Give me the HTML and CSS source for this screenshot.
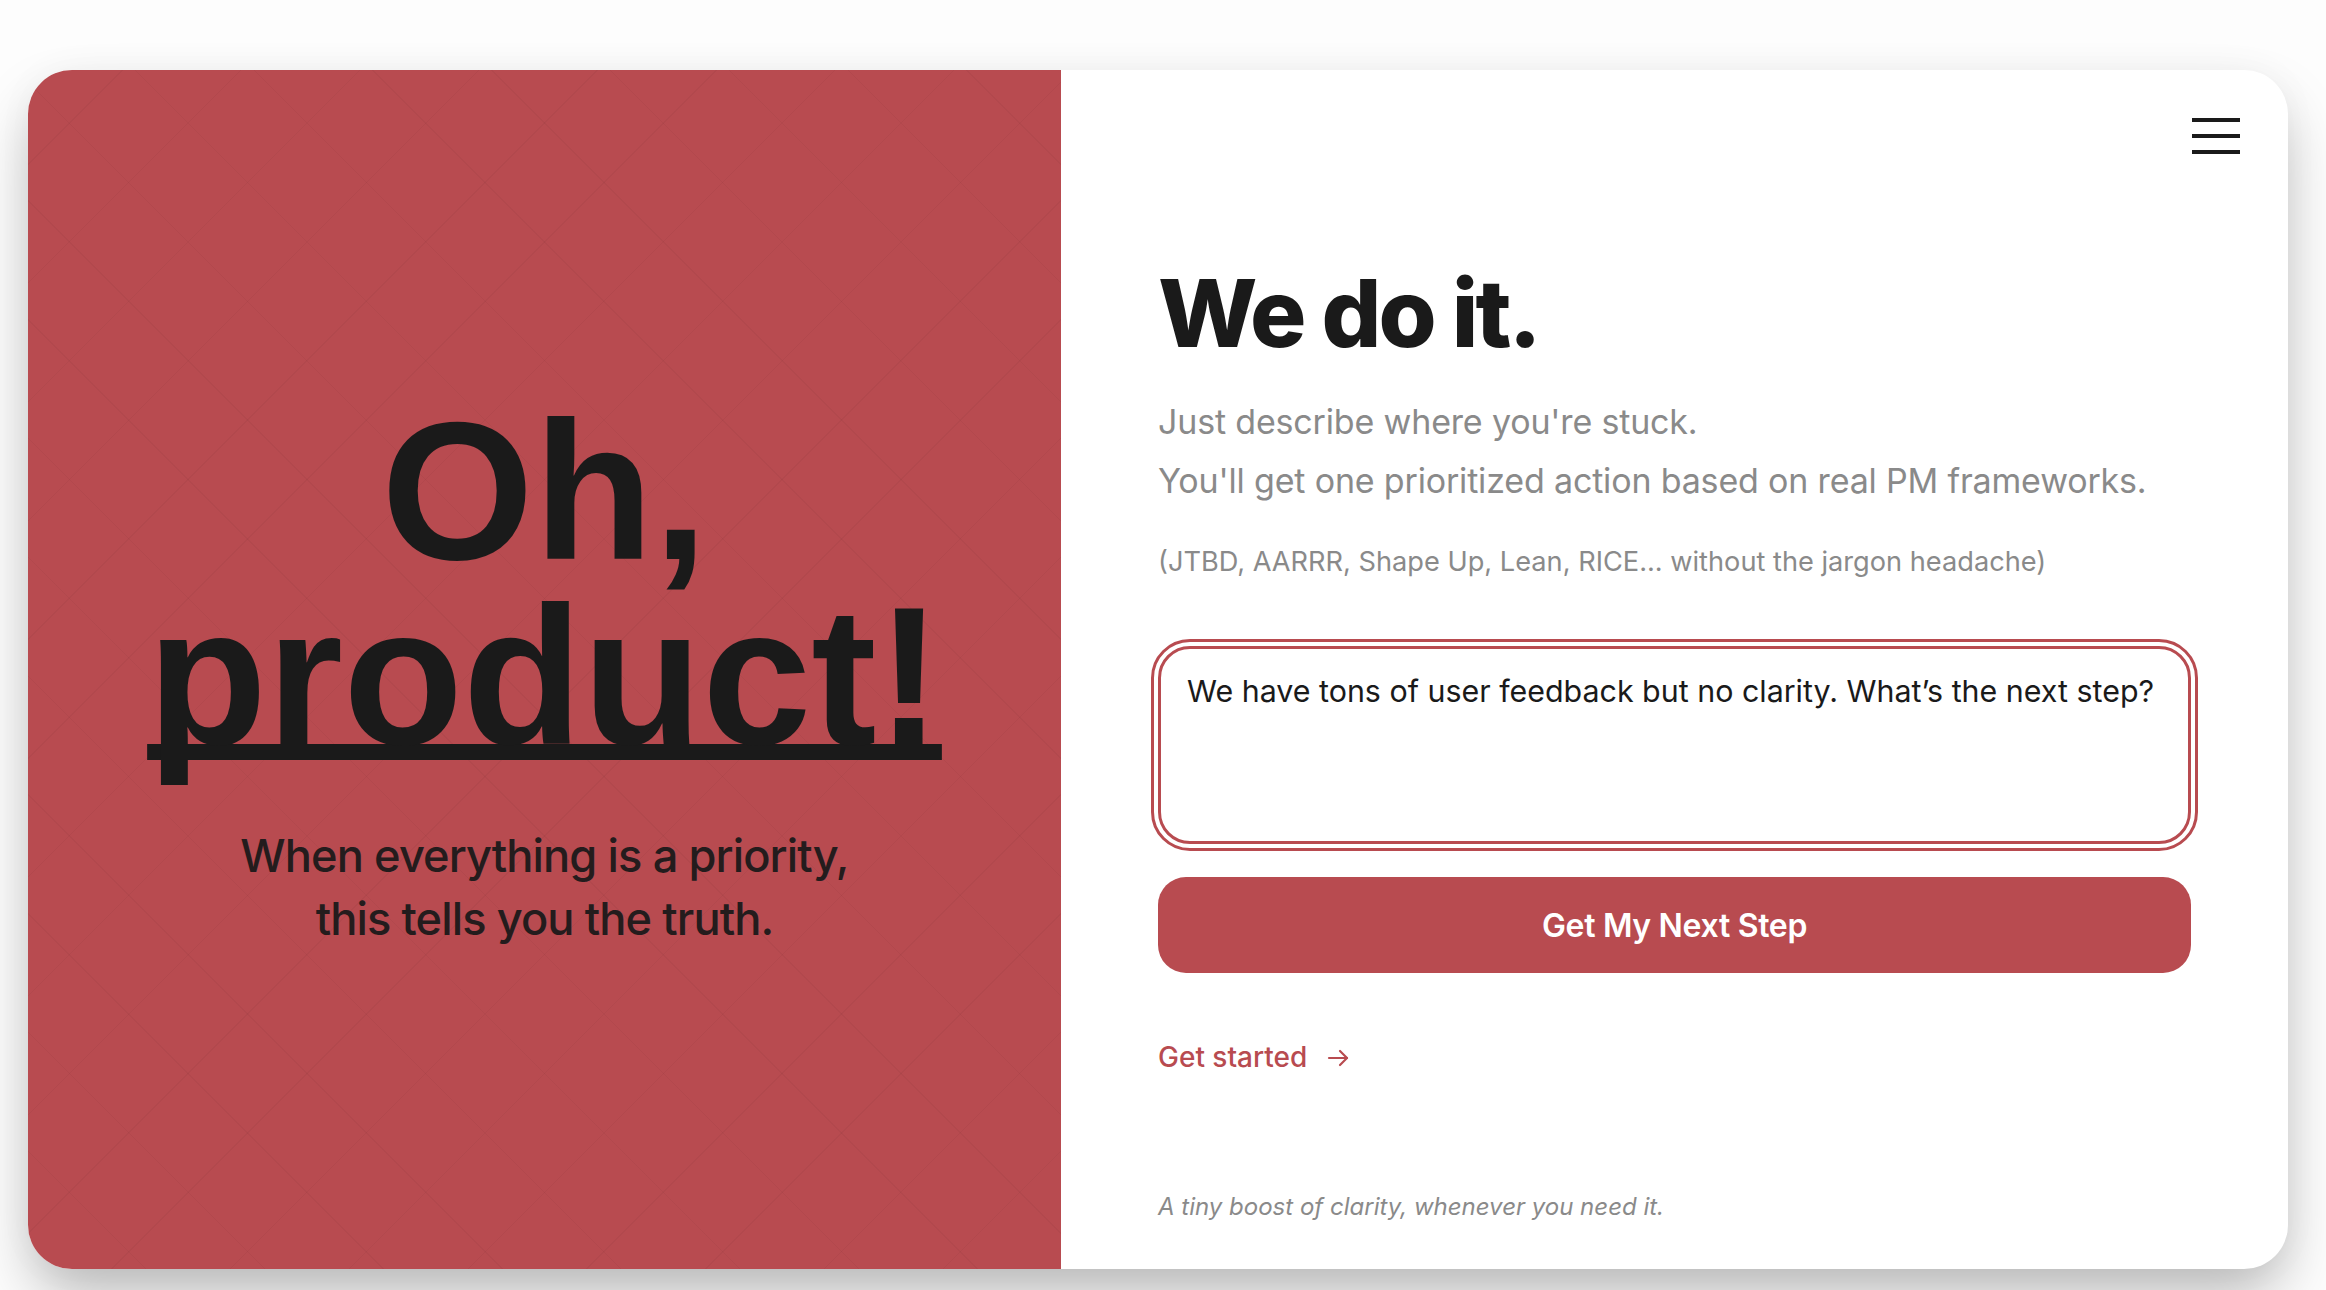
FILE: index.html
```html
<!DOCTYPE html>
<html lang="en">
<head>
<meta charset="utf-8">
<title>Oh, product!</title>
<link rel="stylesheet" href="styles.css">
</head>
<body>
<div class="page">
  <main class="card">
    <section class="hero">
      <h1 class="hero-title">
        <span class="hero-line">Oh,</span>
        <span class="hero-line"><span class="hero-underline">product!</span></span>
      </h1>
      <p class="hero-sub">When everything is a priority,<br>this tells you the truth.</p>
    </section>
    <section class="panel">
      <button class="menu" aria-label="Menu">
        <span></span><span></span><span></span>
      </button>
      <h2 class="panel-title">We do it.</h2>
      <p class="lead">Just describe where you're stuck.<br>You'll get one prioritized action based on real PM frameworks.</p>
      <p class="frameworks">(JTBD, AARRR, Shape Up, Lean, RICE... without the jargon headache)</p>
      <textarea class="prompt">We have tons of user feedback but no clarity. What’s the next step?</textarea>
      <button class="cta">Get My Next Step</button>
      <a class="start" href="#">Get started
        <svg width="24" height="24" viewBox="0 0 24 24" fill="none" stroke="currentColor" stroke-width="2.2" stroke-linecap="round" stroke-linejoin="round"><path d="M3 12h18"/><path d="M14 5l7 7-7 7"/></svg>
      </a>
      <p class="tagline">A tiny boost of clarity, whenever you need it.</p>
    </section>
  </main>
</div>
</body>
</html>
```
FILE: styles.css
```css
* { box-sizing: border-box; }
html, body { margin: 0; padding: 0; }
body {
  background: #fdfdfd;
  font-family: Inter, "Noto Sans", sans-serif;
  height: 1290px;
  overflow: hidden;
}
.page {
  padding: 70px 0 0 28px;
}
.card {
  width: 2260px;
  height: 1199px;
  display: grid;
  grid-template-columns: 1033px 1fr;
  border-radius: 44px;
  background: #ffffff;
  box-shadow: 0 30px 60px -6px rgba(0,0,0,0.28), 0 0 40px rgba(0,0,0,0.03);
  overflow: hidden;
}
.hero {
  background-color: #b84b50;
  background-image:
    repeating-linear-gradient(45deg, transparent 0 83px, rgba(0,0,0,0.035) 83px 84px),
    repeating-linear-gradient(-45deg, transparent 0 83px, rgba(0,0,0,0.035) 83px 84px);
  display: flex;
  flex-direction: column;
  align-items: center;
  justify-content: center;
  padding-top: 10px;
  text-align: center;
}
.hero-title {
  margin: 0;
  font-family: "Liberation Sans", Arial, sans-serif;
  font-weight: 700;
  font-size: 196px;
  line-height: 185px;
  letter-spacing: 0;
  color: #1a1a1a;
}
.hero-line {
  display: block;
  height: 185px;
}
.hero-underline {
  text-decoration: underline;
  text-decoration-thickness: 16px;
  text-underline-offset: 0px;
  text-decoration-skip-ink: none;
}
.hero-sub {
  margin: 55px 0 0;
  font-size: 45.2px;
  line-height: 63px;
  font-weight: 500;
  letter-spacing: -0.02em;
  color: #241c1d;
}
.panel {
  position: relative;
  display: flex;
  flex-direction: column;
  padding: 192px 97px 45px;
}
.menu {
  position: absolute;
  top: 48px;
  right: 48px;
  width: 48px;
  height: 36px;
  padding: 0;
  border: 0;
  background: none;
  display: flex;
  flex-direction: column;
  justify-content: space-between;
}
.menu span {
  display: block;
  width: 48px;
  height: 4px;
  background: #1a1a1a;
}
.panel-title {
  margin: 0;
  font-size: 94px;
  line-height: 103px;
  font-weight: 800;
  letter-spacing: -0.03em;
  color: #1a1a1a;
}
.lead {
  margin: 27px 0 0;
  font-size: 34px;
  line-height: 59px;
  color: #8a8a8a;
  letter-spacing: -0.005em;
}
.frameworks {
  margin: 32px 0 0;
  font-size: 27.2px;
  line-height: 39px;
  color: #8a8a8a;
}
.prompt {
  margin: 65px 0 0;
  width: 100%;
  height: 198px;
  resize: none;
  border: 3px solid #b84b50;
  border-radius: 32px;
  outline: 3px solid #b84b50;
  outline-offset: 4px;
  padding: 20px 26px;
  font-family: Inter, "Noto Sans", sans-serif;
  font-size: 30.4px;
  line-height: 44px;
  color: #1a1a1a;
  background: #fff;
}
.cta {
  margin-top: 33px;
  height: 96px;
  width: 100%;
  border: 0;
  border-radius: 28px;
  background: #b84b50;
  color: #fff;
  font-family: Inter, "Noto Sans", sans-serif;
  font-size: 32px;
  font-weight: 600;
  letter-spacing: -0.01em;
}
.start {
  margin-top: 64px;
  display: flex;
  align-items: center;
  gap: 19px;
  align-self: flex-start;
  color: #b84b50;
  text-decoration: none;
  font-size: 28px;
  line-height: 41px;
  font-weight: 500;
}
.start svg { display: block; }
.tagline {
  margin: auto 0 0;
  font-size: 24px;
  line-height: 34px;
  font-style: italic;
  color: #8a8a8a;
}
```
